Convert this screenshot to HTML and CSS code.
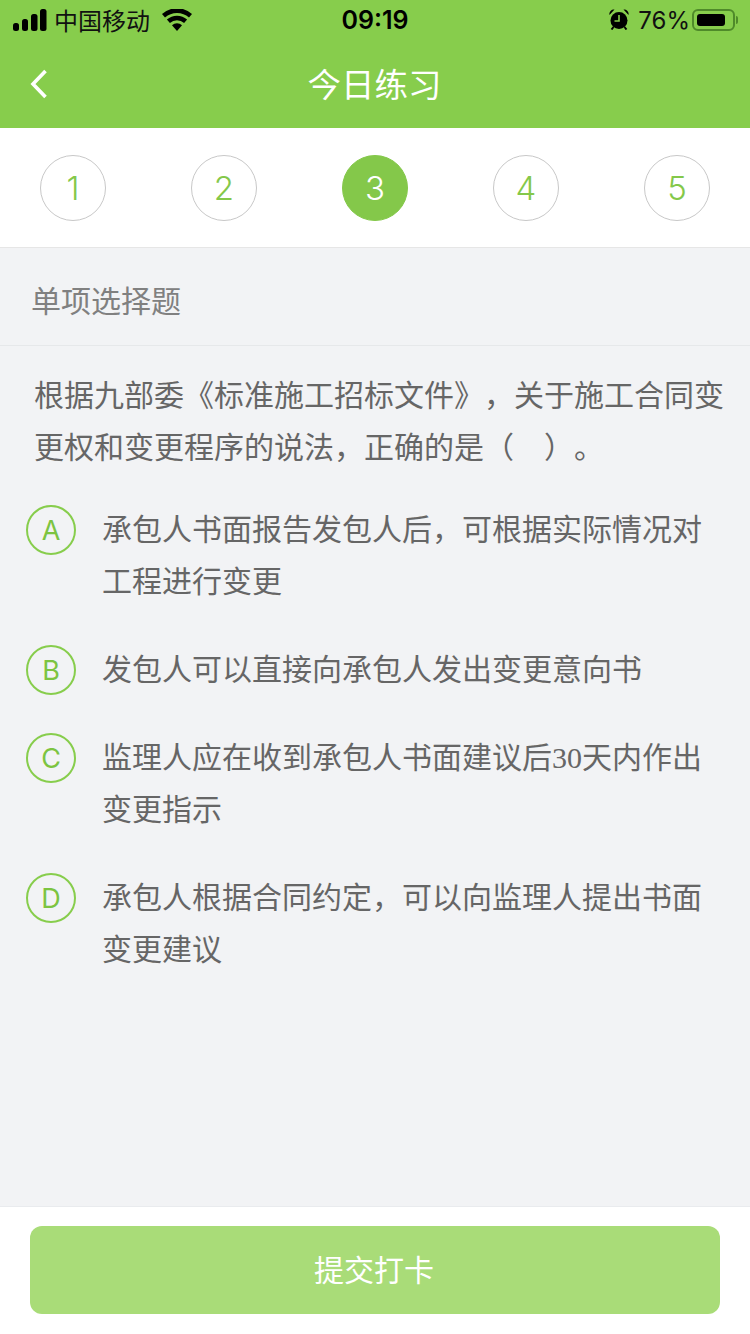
FILE: index.html
```html
<!DOCTYPE html>
<html lang="zh-CN">
<head>
    <meta charset="UTF-8">
    <meta name="viewport" content="width=device-width, initial-scale=1.0">
    <title>今日练习</title>
    <link rel="stylesheet" href="styles.css">
</head>
<body>
    <div class="page">
        <header class="header">
            <div class="status-bar">
                <div class="status-left">
                    <svg class="signal" width="34" height="22" viewBox="0 0 34 22">
                        <rect x="0" y="14" width="6" height="8" rx="2.500"/>
                        <rect x="9" y="10" width="6" height="12" rx="2.500"/>
                        <rect x="18" y="5" width="6.500" height="17" rx="2.500"/>
                        <rect x="27" y="0" width="6.500" height="22" rx="2.500"/>
                    </svg>
                    <span class="carrier">中国移动</span>
                    <svg class="wifi" width="30" height="22" viewBox="0 0 30 22">
                        <path d="M15 22l-5-5.700a7.200 7.200 0 0 1 10 0z"/>
                        <path d="M7.900 14l-3-3.400a15 15 0 0 1 20.200 0l-3 3.400a10.600 10.600 0 0 0-14.200 0z"/>
                        <path d="M3 8.400L0 5a22.400 22.400 0 0 1 30 0l-3 3.400a18.200 18.200 0 0 0-24 0z"/>
                    </svg>
                </div>
                <div class="status-time">09:19</div>
                <div class="status-right">
                    <svg class="alarm" width="20" height="21" viewBox="0 0 20 21">
                        <circle cx="10" cy="11.500" r="8.500"/>
                        <path d="M0.500 6a4.500 4.500 0 0 1 5-5.500zM19.500 6a4.500 4.500 0 0 0-5-5.500z"/>
                        <path d="M4.500 18l-2 2.500M15.500 18l2 2.500" class="alarm-feet"/>
                        <path d="M10 6v6h-4.500" class="alarm-hand"/>
                    </svg>
                    <span class="battery-text">76%</span>
                    <div class="battery"><div class="battery-fill"></div></div>
                    <div class="battery-nub"></div>
                </div>
            </div>
            <div class="nav-bar">
                <svg class="back" width="18" height="30" viewBox="0 0 18 30">
                    <path d="M15.500 2L3 15l12.500 13"/>
                </svg>
                <div class="nav-title">今日练习</div>
            </div>
        </header>

        <div class="steps">
            <div class="step">1</div>
            <div class="step">2</div>
            <div class="step active">3</div>
            <div class="step">4</div>
            <div class="step">5</div>
        </div>

        <main class="content">
            <div class="type-label">单项选择题</div>
            <div class="question">
                <p class="question-text">根据九部委《标准施工招标文件》，关于施工合同变更权和变更程序的说法，正确的是（　）。</p>
                <div class="option">
                    <div class="option-mark">A</div>
                    <div class="option-text">承包人书面报告发包人后，可根据实际情况对工程进行变更</div>
                </div>
                <div class="option">
                    <div class="option-mark">B</div>
                    <div class="option-text">发包人可以直接向承包人发出变更意向书</div>
                </div>
                <div class="option">
                    <div class="option-mark">C</div>
                    <div class="option-text">监理人应在收到承包人书面建议后<span class="num">30</span>天内作出变更指示</div>
                </div>
                <div class="option">
                    <div class="option-mark">D</div>
                    <div class="option-text">承包人根据合同约定，可以向监理人提出书面变更建议</div>
                </div>
            </div>
        </main>

        <footer class="footer">
            <button class="submit">提交打卡</button>
        </footer>
    </div>
</body>
</html>
```

FILE: styles.css
```css
* {
    margin: 0;
    padding: 0;
    box-sizing: border-box;
}
body {
    font-family: "Inter", "Noto Sans CJK SC", sans-serif;
    background-color: #f2f3f5;
    text-spacing-trim: space-all;
}
.page {
    width: 750px;
    height: 1334px;
    display: flex;
    flex-direction: column;
    overflow: hidden;
}
.header {
    height: 128px;
    background-color: #87cd4c;
}
.status-bar {
    height: 40px;
    display: grid;
    grid-template-columns: 1fr auto 1fr;
    align-items: center;
    color: #000;
}
.status-left {
    display: flex;
    align-items: center;
    padding-left: 13px;
}
.signal {
    fill: #000;
}
.carrier {
    font-size: 24px;
    margin-left: 7px;
    margin-right: 1px;
    margin-top: -2px;
    color: #111;
}
.wifi {
    fill: #000;
    margin-left: 11px;
}
.status-time {
    font-size: 25px;
    font-weight: 600;
}
.status-right {
    display: flex;
    align-items: center;
    justify-content: flex-end;
    padding-right: 12px;
}
.alarm {
    fill: #000;
    margin-top: -2px;
}
.alarm-feet {
    fill: none;
    stroke: #000;
    stroke-width: 2;
}
.alarm-hand {
    fill: none;
    stroke: #87cd4c;
    stroke-width: 1.6;
}
.battery-text {
    font-size: 24px;
    margin-left: 9px;
    color: #111;
}
.battery {
    width: 43px;
    height: 22px;
    margin-left: 2px;
    padding: 3px;
    border: 2px solid #4f8a2a;
    border-radius: 6px;
}
.battery-fill {
    width: 28px;
    height: 100%;
    background-color: #000;
    border-radius: 3px;
}
.battery-nub {
    width: 2px;
    height: 8px;
    margin-left: 1px;
    background-color: #4f8a2a;
    border-radius: 0 2px 2px 0;
}
.nav-bar {
    height: 88px;
    display: flex;
    align-items: center;
    justify-content: center;
    position: relative;
}
.back {
    position: absolute;
    left: 30px;
    top: 29px;
    fill: none;
    stroke: #fff;
    stroke-width: 3.6;
}
.nav-title {
    font-size: 33.500px;
    color: #fff;
    margin-top: -4px;
    margin-right: 1px;
}
.steps {
    height: 120px;
    padding: 27px 40px 0;
    display: flex;
    justify-content: space-between;
    align-items: flex-start;
    background-color: #fff;
    border-bottom: 1px solid #e6e6e6;
}
.step {
    width: 66px;
    height: 66px;
    display: flex;
    align-items: center;
    justify-content: center;
    border: 1px solid #c8c8c8;
    border-radius: 50%;
    font-size: 33px;
    font-weight: 300;
    color: #84c84a;
}
.step.active {
    background-color: #84c84a;
    border-color: #84c84a;
    color: #fff;
}
.content {
    flex: 1;
}
.type-label {
    height: 98px;
    padding: 5px 31px 0;
    display: flex;
    align-items: center;
    font-size: 30px;
    color: #808080;
    border-bottom: 1px solid #e6e8ea;
}
.question {
    padding: 23px 26px 0;
}
.question-text {
    font-size: 30px;
    line-height: 52px;
    color: #666;
    padding-left: 8px;
    width: 702px;
    margin-bottom: 30px;
}
.option {
    display: flex;
    align-items: flex-start;
    gap: 26px;
    margin-bottom: 36px;
}
.option-mark {
    flex: none;
    width: 50px;
    height: 50px;
    margin-top: 2px;
    display: flex;
    align-items: center;
    justify-content: center;
    border: 2px solid #87cd4c;
    border-radius: 50%;
    font-size: 27px;
    color: #7cc441;
}
.option-text {
    font-size: 30px;
    line-height: 52px;
    color: #666;
    width: 602px;
}
.num {
    font-family: "Liberation Serif", serif;
    line-height: 1;
}
.footer {
    height: 128px;
    padding: 19px 30px 0;
    background-color: #fff;
    border-top: 1px solid #e9ebee;
}
.submit {
    display: block;
    width: 100%;
    height: 88px;
    padding-bottom: 5px;
    padding-right: 2px;
    border: none;
    border-radius: 12px;
    background-color: #a9dc78;
    color: #fff;
    font-family: inherit;
    font-size: 30px;
}
```
